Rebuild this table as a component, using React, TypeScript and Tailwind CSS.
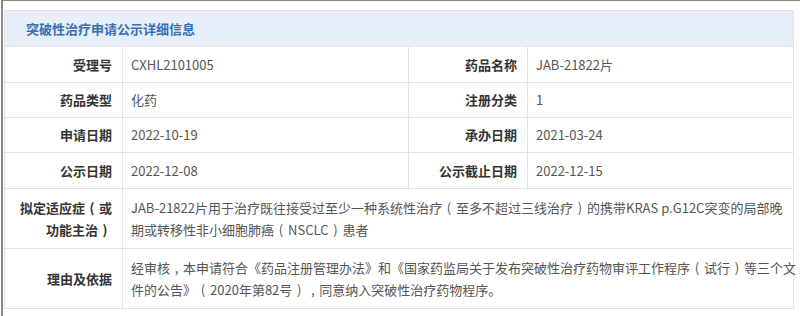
import React from "react";

const font = { fontFamily: '"Noto Sans CJK SC", "Noto Sans", sans-serif' };

function L() {
  return <span className="inline-block w-[14px] text-center">(</span>;
}
function R() {
  return <span className="inline-block w-[14px] text-center">)</span>;
}
function C() {
  return <span className="inline-block w-[13px] text-center">,</span>;
}

function Label({ children }: { children: React.ReactNode }) {
  return (
    <div className="bg-white flex items-center justify-end pr-[10px] text-[13px] font-bold text-[#333333] text-right leading-[22px]">
      <div>{children}</div>
    </div>
  );
}

function Value({ children, span }: { children: React.ReactNode; span?: boolean }) {
  return (
    <div
      className={
        "bg-white flex items-center pl-[8px] text-[13px] text-[#555555] leading-[22px] whitespace-nowrap " +
        (span ? "col-span-3" : "")
      }
    >
      <div>{children}</div>
    </div>
  );
}

export default function App() {
  return (
    <div className="w-[800px] h-[316px] bg-white overflow-hidden" style={font}>
      <div className="ml-[1px] h-[316px] border-t border-l-2 border-[#8a8a8a] pl-[1px] pt-[9px]">
        <div className="w-[790px] border border-[#e2e2e2] bg-[#e2e2e2] grid grid-cols-[117px_285px_118px_265px] grid-rows-[35px_35px_34px_34px_35px_59px_59px] gap-px">
          <div className="col-span-4 bg-[#e7eef8] flex items-center pl-[21px] text-[13px] font-bold text-[#3a6eb2]">
            突破性治疗申请公示详细信息
          </div>
          <Label>受理号</Label>
          <Value>CXHL2101005</Value>
          <Label>药品名称</Label>
          <Value>JAB-21822片</Value>

          <Label>药品类型</Label>
          <Value>化药</Value>
          <Label>注册分类</Label>
          <Value>1</Value>

          <Label>申请日期</Label>
          <Value>2022-10-19</Value>
          <Label>承办日期</Label>
          <Value>2021-03-24</Value>

          <Label>公示日期</Label>
          <Value>2022-12-08</Value>
          <Label>公示截止日期</Label>
          <Value>2022-12-15</Value>

          <Label>
            拟定适应症<L />或
            <br />
            功能主治<R />
          </Label>
          <Value span>
            JAB-21822片用于治疗既往接受过至少一种系统性治疗<L />至多不超过三线治疗<R />的携带KRAS p.G12C突变的局部晚
            <br />
            期或转移性非小细胞肺癌<L />NSCLC<R />患者
          </Value>

          <Label>理由及依据</Label>
          <Value span>
            经审核<C />本申请符合《药品注册管理办法》和《国家药监局关于发布突破性治疗药物审评工作程序<L />试行<R />等三个文
            <br />
            件的公告》<L />2020年第82号<R />
            <C />同意纳入突破性治疗药物程序。
          </Value>
        </div>
      </div>
    </div>
  );
}
